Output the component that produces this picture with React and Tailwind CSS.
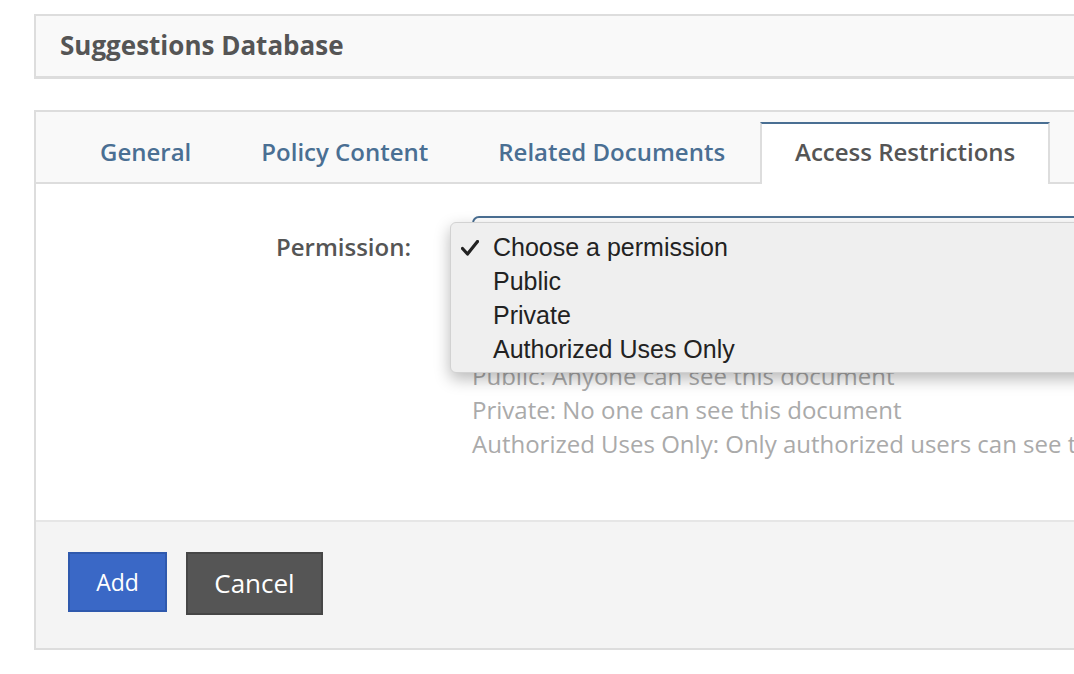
import { useState } from "react";

const tabs = ["General", "Policy Content", "Related Documents", "Access Restrictions"];

const options = ["Choose a permission", "Public", "Private", "Authorized Uses Only"];

const helpLines = [
  "Public: Anyone can see this document",
  "Private: No one can see this document",
  "Authorized Uses Only: Only authorized users can see this document",
];

function Check() {
  return (
    <svg width="18" height="16" viewBox="0 0 18 16" className="block">
      <path d="M1.5 8.5 L6.5 14 L16.5 1.5" fill="none" stroke="#222" strokeWidth="3.2" strokeLinecap="round" strokeLinejoin="round" />
    </svg>
  );
}

export default function App() {
  const [active] = useState(3);

  return (
    <div className="w-[1074px] h-[674px] overflow-hidden bg-white font-['Open_Sans',sans-serif]">
      <div className="pl-[34px] pt-[14px] w-[1140px]">
        <div className="h-[65px] flex items-center px-[24px] pb-[2px] bg-[#f9f9f9] border-2 border-b-[3px] border-[#dddddd]">
          <h1 className="text-[26px] font-bold text-[#555555] leading-none">Suggestions Database</h1>
        </div>

        <div className="mt-[31px] border-2 border-[#dddddd]">
          <div className="h-[72px] bg-[#f9f9f9] border-b-2 border-[#dddddd] flex items-end pl-[29px]">
            {tabs.map((t, i) => (
              <div
                key={t}
                className={
                  i === active
                    ? "relative -mb-[2px] h-[62px] px-[33px] pb-[4px] flex items-center bg-white border-2 border-b-0 border-[#dddddd] border-t-[#4a6f93] text-[24px] font-semibold text-[#555555]"
                    : "relative -mb-[2px] h-[62px] px-[33px] pb-[4px] flex items-center border-2 border-b-0 border-transparent text-[24px] font-semibold text-[#4a6f93]"
                }
              >
                {t}
              </div>
            ))}
          </div>

          <div className="relative h-[336px] bg-white pt-[32px]">
            <div className="flex">
              <div className="w-[375px] h-[62px] flex items-center justify-end text-[24px] font-semibold text-[#555555]">
                Permission:
              </div>
              <div className="ml-[61px] flex-1 h-[62px] rounded-[7px] border-2 border-[#4a6f93] bg-white" />
            </div>
            <div className="ml-[436px] mt-[81px] text-[24px] leading-[34px] text-[#aaaaaa] whitespace-nowrap">
              {helpLines.map((l) => (
                <div key={l}>{l}</div>
              ))}
            </div>

            <div className="absolute left-[414px] top-[38px] w-[700px] h-[151px] pt-[8px] rounded-[6px] bg-[#efefef] border border-[#d2d2d2] shadow-[0_6px_16px_rgba(0,0,0,0.28)] font-['Liberation_Sans',Arial,sans-serif] text-[25px] text-[#222222]">
              {options.map((o, i) => (
                <div key={o} className="h-[34px] flex items-center">
                  <div className="w-[42px] pl-[10px] flex items-center">{i === 0 && <Check />}</div>
                  <span>{o}</span>
                </div>
              ))}
            </div>
          </div>

          <div className="h-[128px] bg-[#f4f4f4] border-t-2 border-[#e6e6e6] pt-[30px] pl-[32px] flex items-start gap-[19px]">
            <button className="w-[99px] h-[60px] bg-[#3a68c6] border-2 border-[#2f59ad] text-white text-[23px]">
              Add
            </button>
            <button className="w-[137px] h-[63px] bg-[#555555] border-2 border-[#464646] text-white text-[26px]">
              Cancel
            </button>
          </div>
        </div>
      </div>
    </div>
  );
}
